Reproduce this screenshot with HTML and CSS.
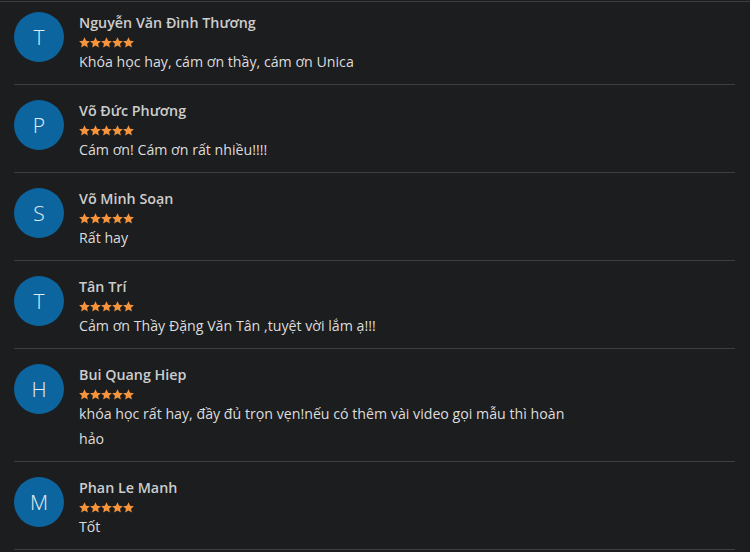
FILE: index.html
```html
<!DOCTYPE html>
<html lang="vi">
<head>
  <meta charset="UTF-8">
  <title>Đánh giá học viên</title>
  <link rel="stylesheet" href="styles.css">
</head>
<body>
  <div class="reviews">
    <div class="review">
      <div class="avatar">T</div>
      <div class="body">
        <div class="name">Nguyễn Văn Đình Thương</div>
        <div class="stars"></div>
        <div class="text">Khóa học hay, cám ơn thầy, cám ơn Unica</div>
      </div>
    </div>
    <div class="review">
      <div class="avatar">P</div>
      <div class="body">
        <div class="name">Võ Đức Phương</div>
        <div class="stars"></div>
        <div class="text">Cám ơn! Cám ơn rất nhiều!!!!</div>
      </div>
    </div>
    <div class="review">
      <div class="avatar">S</div>
      <div class="body">
        <div class="name">Võ Minh Soạn</div>
        <div class="stars"></div>
        <div class="text">Rất hay</div>
      </div>
    </div>
    <div class="review">
      <div class="avatar">T</div>
      <div class="body">
        <div class="name">Tân Trí</div>
        <div class="stars"></div>
        <div class="text">Cảm ơn Thầy Đặng Văn Tân ,tuyệt vời lắm ạ!!!</div>
      </div>
    </div>
    <div class="review">
      <div class="avatar">H</div>
      <div class="body">
        <div class="name">Bui Quang Hiep</div>
        <div class="stars"></div>
        <div class="text">khóa học rất hay, đầy đủ trọn vẹn!nếu có thêm vài video gọi mẫu thì hoàn hảo</div>
      </div>
    </div>
    <div class="review">
      <div class="avatar">M</div>
      <div class="body">
        <div class="name">Phan Le Manh</div>
        <div class="stars"></div>
        <div class="text">Tốt</div>
      </div>
    </div>
  </div>

  <script>
    const star = '<svg width="11" height="11" viewBox="1 1 22 22"><path d="M12 1.5l3.2 7 7.6.8-5.7 5.1 1.6 7.5L12 18l-6.7 3.9 1.6-7.5L1.2 9.3l7.6-.8z" fill="#f7943c"/></svg>';
    document.querySelectorAll(".stars").forEach(el => {
      el.innerHTML = star.repeat(5);
    });
  </script>
</body>
</html>
```

FILE: styles.css
```css
body { margin: 0; background: #1c1d1f; font-family: "Open Sans", "Noto Sans", sans-serif; }
.reviews { margin-top: 1px; border-top: 1px solid #3d3e40; }
.review { display: flex; gap: 15px; margin: 0 15px 0 14px; padding: 15px 0 10px; border-bottom: 1px solid #3d3e40; }
.review:first-child { padding-top: 10px; }
.avatar { flex: none; width: 50px; height: 50px; border-radius: 50%; background: #0d65a0; color: #e4ecf2; font-size: 21px; font-weight: 300; display: flex; align-items: center; justify-content: center; }
.body { width: 505px; }
.name { padding-top: 1px; font-size: 14.3px; line-height: 20px; font-weight: 600; color: #cdcdcd; }
.stars { display: flex; height: 16px; padding-top: 4px; box-sizing: border-box; }
.text { font-size: 14.2px; line-height: 25px; color: #dcdcdc; }
```
